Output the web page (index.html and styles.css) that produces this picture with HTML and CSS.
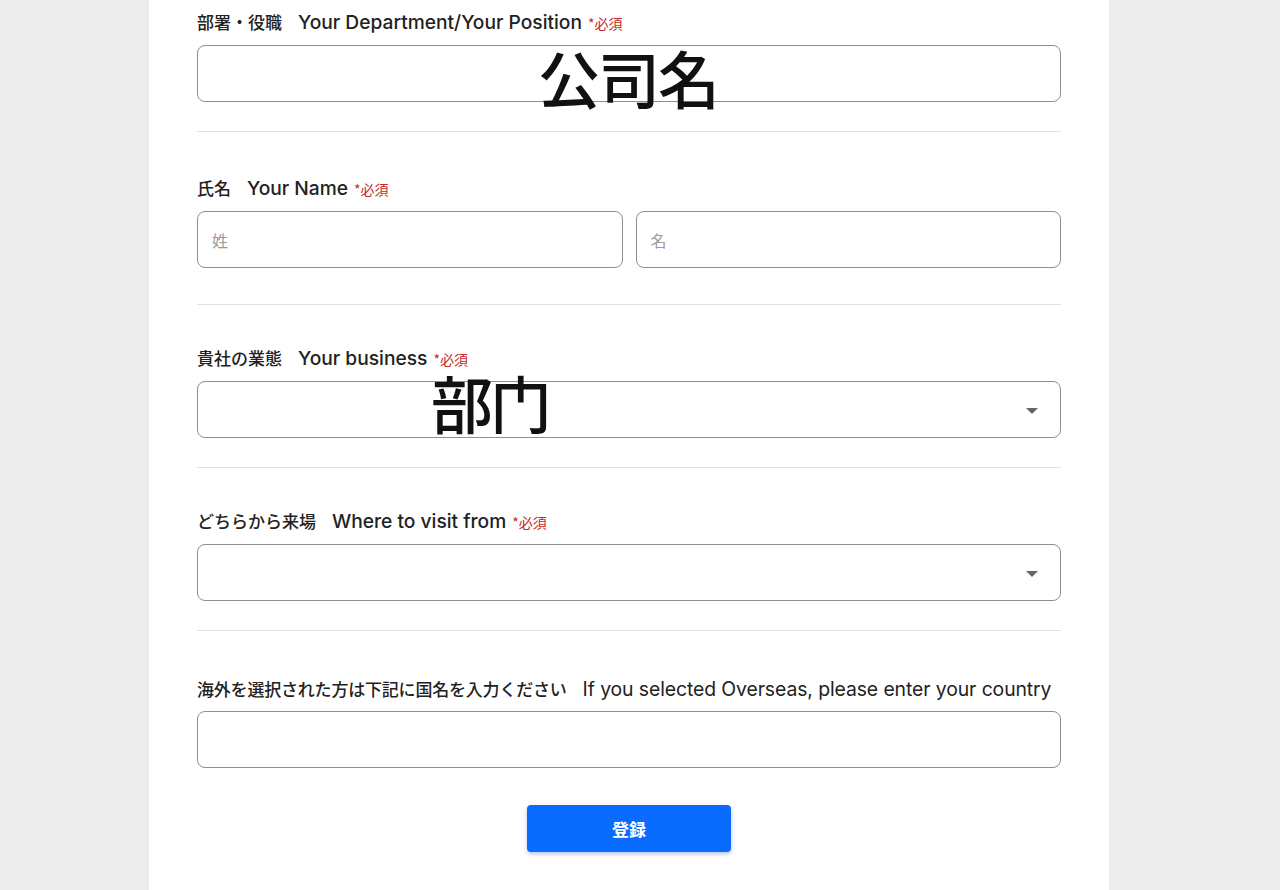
FILE: index.html
```html
<!DOCTYPE html>
<html lang="ja">
<head>
<meta charset="utf-8">
<title>登録フォーム</title>
<link rel="stylesheet" href="styles.css">
</head>
<body>
<div class="page">
  <form class="panel">
    <div class="section first">
      <div class="label">部署・役職<span class="en">Your Department/Your Position</span><span class="req">*必須</span></div>
      <div class="field-wrap">
        <div class="input"></div>
        <span class="overlay overlay-company">公司名</span>
      </div>
    </div>
    <div class="section name">
      <div class="label">氏名<span class="en">Your Name</span><span class="req">*必須</span></div>
      <div class="row">
        <div class="input"><span class="ph">姓</span></div>
        <div class="input"><span class="ph">名</span></div>
      </div>
    </div>
    <div class="section business">
      <div class="label">貴社の業態<span class="en">Your business</span><span class="req">*必須</span></div>
      <div class="field-wrap">
        <div class="input select"><span class="caret"></span></div>
        <span class="overlay overlay-dept">部门</span>
      </div>
    </div>
    <div class="section visit">
      <div class="label">どちらから来場<span class="en">Where to visit from</span><span class="req">*必須</span></div>
      <div class="input select"><span class="caret"></span></div>
    </div>
    <div class="section last">
      <div class="label long">海外を選択された方は下記に国名を入力ください<span class="en">If you selected Overseas, please enter your country</span></div>
      <div class="input"></div>
      <div class="actions">
        <button type="button" class="btn">登録</button>
      </div>
    </div>
  </form>
</div>
</body>
</html>
```

FILE: styles.css
```css
* { box-sizing: border-box; }
html, body {
  margin: 0;
  padding: 0;
  background: #ececec;
}
body {
  font-family: "Noto Sans CJK JP", "Noto Sans", sans-serif;
  color: #222;
}
.page {
  display: flex;
  justify-content: flex-start;
  padding-left: 149px;
  height: 890px;
  overflow: hidden;
}
.panel {
  width: 960px;
  background: #fff;
  padding: 10px 48px 40px;
  display: flex;
  flex-direction: column;
}
.section {
  padding: 41px 0 29px;
  border-bottom: 1px solid #e2e2e2;
  display: flex;
  flex-direction: column;
  gap: 10px;
}
.section.first { padding-top: 0; }
.section.name { padding-top: 44px; padding-bottom: 36px; }
.section.business { padding-top: 41px; }
.section.visit { padding-top: 41px; }
.section.last { border-bottom: none; padding-top: 46px; }
.label {
  font-size: 17px;
  line-height: 24px;
  font-weight: 500;
  color: #222;
  white-space: nowrap;
}
.label .en {
  font-family: "Inter", "Noto Sans", sans-serif;
  font-size: 19.2px;
  font-weight: 500;
  margin-left: 16px;
}
.label .req {
  font-size: 14px;
  color: #c62828;
  margin-left: 6px;
  font-weight: 400;
}
.label.long { letter-spacing: -0.2px; }
.label.long .en { margin-left: 16px; font-size: 19.4px; font-weight: 400; letter-spacing: -0.1px; }
.field-wrap { position: relative; }
.input {
  height: 57px;
  border: 1px solid #8f8f8f;
  border-radius: 8px;
  background: #fff;
  display: flex;
  align-items: center;
  padding: 0 14px;
}
.row {
  display: grid;
  grid-template-columns: 1fr 1fr;
  gap: 13px;
}
.ph {
  color: #9a9a9a;
  font-size: 16px;
}
.select { justify-content: flex-end; padding-right: 22px; }
.caret {
  width: 0;
  height: 0;
  border-left: 6px solid transparent;
  border-right: 6px solid transparent;
  border-top: 6px solid #666;
  margin-top: 2px;
}
.overlay {
  position: absolute;
  font-family: "Noto Sans CJK SC", sans-serif;
  font-size: 62px;
  font-weight: 500;
  color: #111;
  line-height: 56px;
  pointer-events: none;
}
.overlay-company { left: 341px; top: 4px; letter-spacing: -2px; }
.overlay-dept { left: 234px; top: -7px; letter-spacing: -3px; }
.actions {
  display: flex;
  justify-content: center;
  margin-top: 27px;
}
.btn {
  width: 204px;
  height: 47px;
  border: none;
  border-radius: 4px;
  background: #0a6cff;
  color: #fff;
  font-family: "Noto Sans CJK JP", sans-serif;
  font-size: 17px;
  font-weight: 700;
  box-shadow: 0 2px 4px rgba(0, 60, 160, 0.3);
}
```
